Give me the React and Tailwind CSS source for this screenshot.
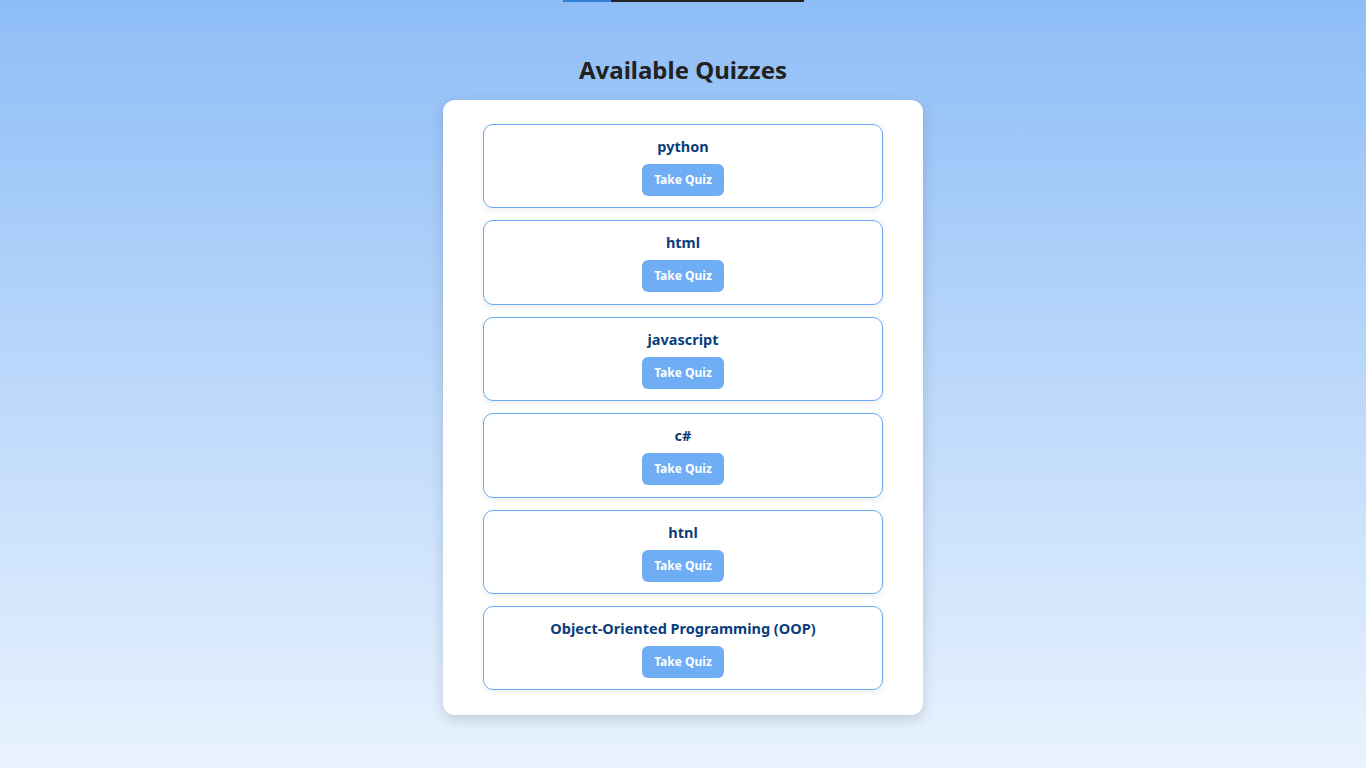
const quizzes = ['python', 'html', 'javascript', 'c#', 'htnl', 'Object-Oriented Programming (OOP)'];

export default function App() {
  return (
    <div
      className="min-h-screen bg-gradient-to-b from-[#8ebdf6] to-[#e9f3fe] flex flex-col items-center"
      style={{ fontFamily: '"Noto Sans", "Open Sans", sans-serif' }}
    >
      <div className="flex h-[2px] w-[241px]">
        <div className="w-[48px] bg-[#2f7fd8]" />
        <div className="flex-1 bg-[#222]" />
      </div>
      <h2 className="mt-[52px] text-[24px] leading-8 font-bold text-[#222]">Available Quizzes</h2>
      <div className="mt-[14px] w-[480px] bg-white rounded-xl shadow-[0_4px_14px_rgba(0,0,0,0.15)] px-10 pt-6 pb-[25px] flex flex-col gap-3">
        {quizzes.map((q, i) => (
          <div
            key={i}
            className="border border-[#6aa9f2] rounded-[10px] shadow-[0_2px_6px_rgba(0,0,0,0.08)] px-4 pt-[11px] pb-[11.4px] flex flex-col items-center"
          >
            <p className="text-[14.5px] leading-5 font-bold text-[#0a3d7c] mb-2">{q}</p>
            <button className="h-8 w-[82px] rounded-md bg-[#6fadf4] text-white text-[12px] font-bold">
              Take Quiz
            </button>
          </div>
        ))}
      </div>
    </div>
  );
}
